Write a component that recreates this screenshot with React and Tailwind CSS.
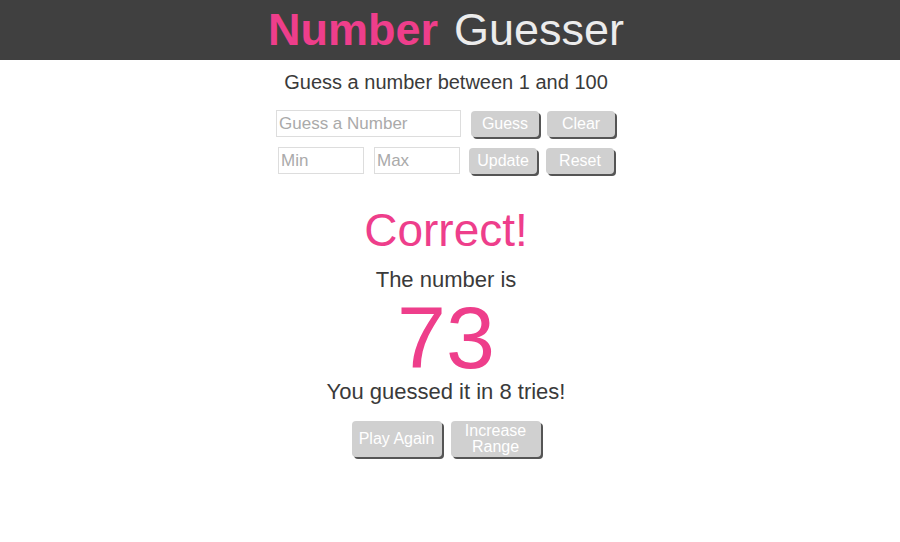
export default function App() {
  const font = { fontFamily: '"Liberation Sans", Arial, sans-serif' };
  const btn =
    "rounded-[4px] bg-[#d0d0d0] text-white text-[16px] leading-none shadow-[2px_2px_0_#555] flex items-center justify-center";
  const input =
    "border border-[#dddddd] bg-white text-[17px] px-[2px] text-[#333] placeholder:text-[#aaaaaa] outline-none";
  return (
    <div className="w-[900px] h-[542px] bg-white" style={font}>
      <header className="h-[60px] bg-[#404040] flex items-center justify-center pr-[8px]">
        <h1 className="text-[45px] leading-none pb-[2px]">
          <span className="font-bold text-[#ee3e8b]">Number</span>
          <span className="font-light text-[#ececec] ml-[16px]">Guesser</span>
        </h1>
      </header>
      <main className="flex flex-col items-center pr-[8px]">
        <p className="mt-[10px] text-[20px] leading-[24px] text-[#3a3a3a]">
          Guess a number between 1 and 100
        </p>
        <div className="mt-[16px] flex items-center w-[340px]">
          <input className={`${input} w-[185px] h-[27px]`} placeholder="Guess a Number" />
          <button className={`${btn} w-[68px] h-[26px] ml-[10px]`}>Guess</button>
          <button className={`${btn} w-[68px] h-[26px] ml-[8px]`}>Clear</button>
        </div>
        <div className="mt-[10px] flex items-center w-[340px]">
          <input className={`${input} w-[86px] h-[27px] ml-[2px]`} placeholder="Min" />
          <input className={`${input} w-[86px] h-[27px] ml-[10px]`} placeholder="Max" />
          <button className={`${btn} w-[68px] h-[26px] ml-[9px]`}>Update</button>
          <button className={`${btn} w-[68px] h-[26px] ml-[9px]`}>Reset</button>
        </div>
        <h2 className="mt-[27px] text-[46px] leading-[58px] text-[#ee3e8b]">Correct!</h2>
        <p className="mt-[7px] text-[22px] leading-[28px] text-[#3a3a3a]">The number is</p>
        <p className="mt-[6px] text-[88px] leading-[76px] text-[#ee3e8b]">73</p>
        <p className="mt-[2px] text-[22px] leading-[28px] text-[#3a3a3a]">
          You guessed it in 8 tries!
        </p>
        <div className="mt-[15px] flex gap-[9px]">
          <button className={`${btn} w-[90px] h-[36px]`}>Play Again</button>
          <button className={`${btn} w-[90px] h-[36px] flex-col`}>
            <span>Increase</span>
            <span>Range</span>
          </button>
        </div>
      </main>
    </div>
  );
}
